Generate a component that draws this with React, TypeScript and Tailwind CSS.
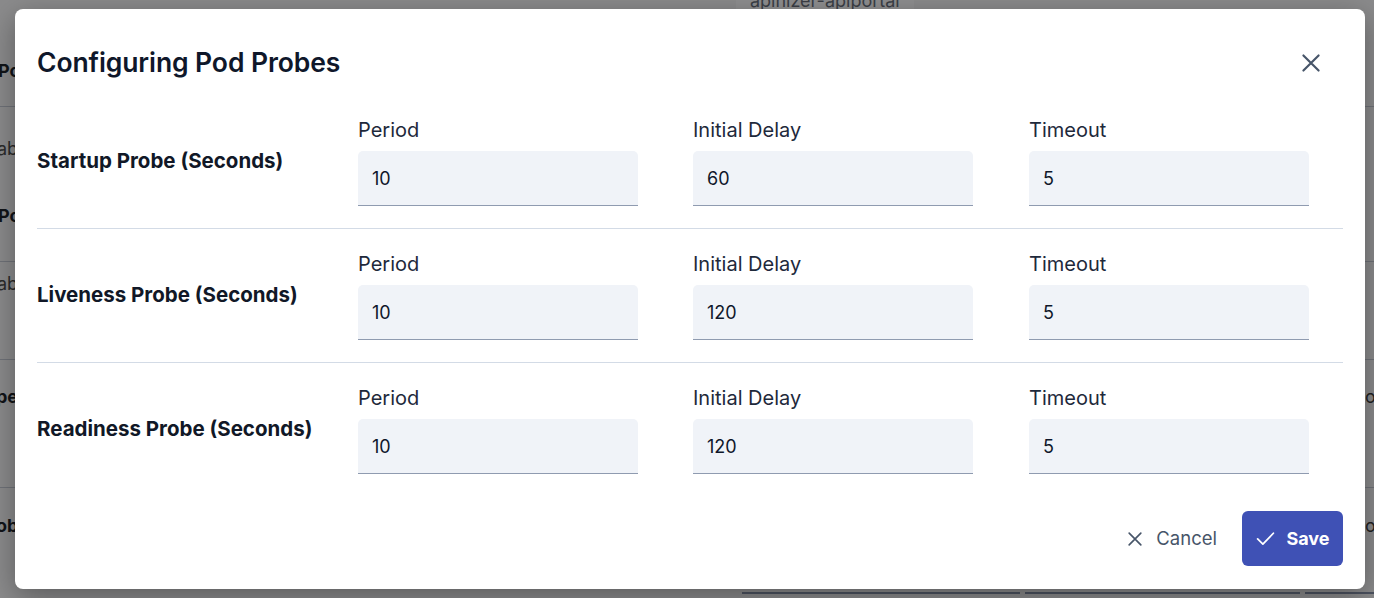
import React from "react";

const font = { fontFamily: "Inter, 'Noto Sans', sans-serif" };

function XIcon({ className }: { className?: string }) {
  return (
    <svg viewBox="0 0 24 24" className={className} fill="none" stroke="currentColor" strokeWidth={2} strokeLinecap="round">
      <path d="M5 5 L19 19 M19 5 L5 19" />
    </svg>
  );
}

function CheckIcon({ className }: { className?: string }) {
  return (
    <svg viewBox="0 0 24 24" className={className} fill="none" stroke="currentColor" strokeWidth={2} strokeLinecap="round" strokeLinejoin="round">
      <path d="M3 12.5 L9 18.5 L21 6" />
    </svg>
  );
}

function Field({ label, value }: { label: string; value: string }) {
  return (
    <div className="flex flex-col gap-[7px]">
      <div className="text-[20px] leading-[28px] text-[#1e293b]">{label}</div>
      <div className="w-[280px] h-[55px] bg-[#f0f3f8] rounded-t-[5px] border-b-[1.5px] border-[#8f9bb0] flex items-center px-[14px] text-[18px] text-[#0f172a]">
        {value}
      </div>
    </div>
  );
}

function ProbeRow({ title, period, delay, timeout, divider }: { title: string; period: string; delay: string; timeout: string; divider: boolean }) {
  return (
    <div className={`grid grid-cols-[321px_335px_336px_1fr] items-center pt-[21px] pb-[22px] ${divider ? "border-b border-[#d3dbe6]" : ""}`}>
      <div className="text-[20.5px] font-bold text-[#111827]">{title}</div>
      <Field label="Period" value={period} />
      <Field label="Initial Delay" value={delay} />
      <Field label="Timeout" value={timeout} />
    </div>
  );
}

export default function App() {
  return (
    <div className="relative w-[1374px] h-[598px] overflow-hidden bg-[#8b8b8c]" style={font}>
      {/* background page (dimmed) */}
      <div className="flex flex-col text-[18px] text-[#262626]">
        <div className="h-[107px] border-b border-[#6f7278] flex justify-between">
          <div className="pt-[57px] font-bold text-[#111418] -ml-[2px]">Pod</div>
          <div className="flex-1 flex">
            <div className="ml-[704px] -mt-[13px] text-[#3b3f46] h-[22px] px-[14px] bg-[#8f8f90]">apinizer-apiportal</div>
          </div>
        </div>
        <div className="h-[155px] border-b border-[#6f7278] flex flex-col">
          <div className="pt-[28px] -ml-[3px] text-[#2b2b2b]">able</div>
          <div className="pt-[40px] font-bold text-[#111418] -ml-[2px]">Pod</div>
        </div>
        <div className="h-[98px] border-b border-[#6f7278]">
          <div className="pt-[8px] -ml-[3px] text-[#2b2b2b]">able</div>
        </div>
        <div className="h-[128px] border-b border-[#6f7278] flex justify-between">
          <div className="pt-[23px] -ml-[4px] font-bold text-[#111418]">pe</div>
          <div className="w-[9px] overflow-hidden pt-[23px] text-[#222]">oc</div>
        </div>
        <div className="h-[110px] flex flex-col justify-between">
          <div className="flex justify-between">
            <div className="pt-[24px] -ml-[4px] font-bold text-[#111418]">ob</div>
            <div className="w-[9px] overflow-hidden pt-[24px] text-[#222]">ou</div>
          </div>
          <div className="flex gap-[5px] pl-[742px] pb-[4px]">
            <div className="w-[278px] h-[2px] bg-[#4d5361]" />
            <div className="w-[275px] h-[2px] bg-[#4d5361]" />
            <div className="flex-1 h-[2px] bg-[#4d5361]" />
          </div>
        </div>
      </div>

      {/* modal */}
      <div className="absolute left-[15px] top-[9px] w-[1350px] h-[580px] bg-white rounded-[8px] shadow-[0_8px_30px_rgba(0,0,0,0.35)] px-[22px] pt-[37px] flex flex-col">
        <div className="flex items-center justify-between h-[32px]">
          <h2 className="text-[26.5px] leading-[32px] font-semibold text-[#0f172a] tracking-[-0.1px]">Configuring Pod Probes</h2>
          <XIcon className="w-[26px] h-[26px] text-[#475569] mr-[19px] mt-[2px]" />
        </div>
        <div className="mt-[17px] flex flex-col">
          <ProbeRow title="Startup Probe (Seconds)" period="10" delay="60" timeout="5" divider />
          <ProbeRow title="Liveness Probe (Seconds)" period="10" delay="120" timeout="5" divider />
          <ProbeRow title="Readiness Probe (Seconds)" period="10" delay="120" timeout="5" divider={false} />
        </div>
        <div className="mt-[15px] flex justify-end items-center gap-[10px]">
          <button className="h-[55px] flex items-center gap-[11px] pl-[13px] pr-[15px] text-[18.5px] text-[#475569]">
            <XIcon className="w-[20px] h-[20px]" />
            <span>Cancel</span>
          </button>
          <button className="h-[55px] w-[101px] rounded-[6px] bg-[#3f51b5] flex items-center justify-center gap-[10px] text-[18px] font-bold text-white">
            <CheckIcon className="w-[21px] h-[21px]" />
            <span>Save</span>
          </button>
        </div>
      </div>
    </div>
  );
}
